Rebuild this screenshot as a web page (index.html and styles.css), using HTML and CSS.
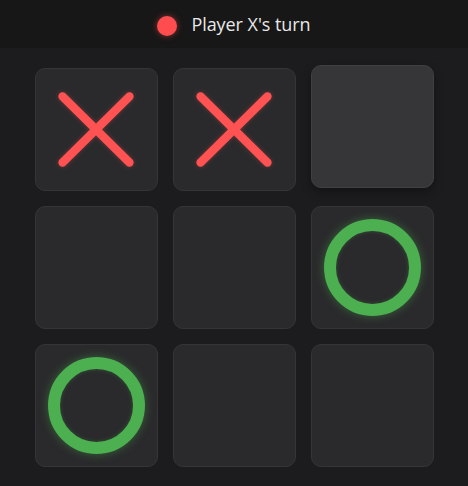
FILE: index.html
```html
<!DOCTYPE html>
<html>
<head>
<meta charset="utf-8">
<link rel="stylesheet" href="styles.css">
</head>
<body>
<header class="status">
  <span class="dot"></span>
  <span class="status-text">Player X's turn</span>
</header>
<main class="board">
  <div class="cell">
    <svg class="mark" viewBox="0 0 123 123"><path d="M27 28 L95 95 M95 28 L27 95" stroke="#ff5252" stroke-width="8.5" stroke-linecap="round" fill="none"/></svg>
  </div>
  <div class="cell">
    <svg class="mark" viewBox="0 0 123 123"><path d="M27 28 L95 95 M95 28 L27 95" stroke="#ff5252" stroke-width="8.5" stroke-linecap="round" fill="none"/></svg>
  </div>
  <div class="cell hover"></div>
  <div class="cell"></div>
  <div class="cell"></div>
  <div class="cell">
    <span class="ring"></span>
  </div>
  <div class="cell">
    <span class="ring"></span>
  </div>
  <div class="cell"></div>
  <div class="cell"></div>
</main>
</body>
</html>
```
FILE: styles.css
```css
* { box-sizing: border-box; }
html, body {
  margin: 0;
  padding: 0;
  background: #1c1c1e;
  height: 100%;
}
body {
  font-family: "Open Sans", "Noto Sans", sans-serif;
  color: #e8e8e8;
}
.status {
  height: 48px;
  background: #171717;
  display: flex;
  align-items: center;
  justify-content: center;
  gap: 14px;
}
.dot {
  width: 20px;
  height: 20px;
  border-radius: 50%;
  background: #ff4d4f;
  box-shadow: 0 0 6px rgba(255, 77, 79, 0.5);
  position: relative;
  top: 2px;
}
.status-text {
  font-size: 18px;
  letter-spacing: -0.05px;
}
.board {
  display: grid;
  grid-template-columns: repeat(3, 123px);
  grid-auto-rows: 123px;
  gap: 15px;
  justify-content: center;
  padding-top: 20px;
}
.cell {
  background: #2a2a2c;
  border: 1px solid #353537;
  border-radius: 10px;
  display: flex;
  align-items: center;
  justify-content: center;
}
.cell.hover {
  background: #363638;
  border-color: #404042;
  transform: translateY(-3px);
  box-shadow: 0 4px 10px rgba(0, 0, 0, 0.35);
}
.mark {
  width: 123px;
  height: 123px;
  display: block;
  filter: drop-shadow(0 0 2px rgba(255, 82, 82, 0.35));
}
.ring {
  width: 97px;
  height: 97px;
  border-radius: 50%;
  border: 12px solid #4caf50;
  box-shadow: 0 0 10px rgba(76, 175, 80, 0.45), inset 0 0 4px rgba(76, 175, 80, 0.3);
}
```
